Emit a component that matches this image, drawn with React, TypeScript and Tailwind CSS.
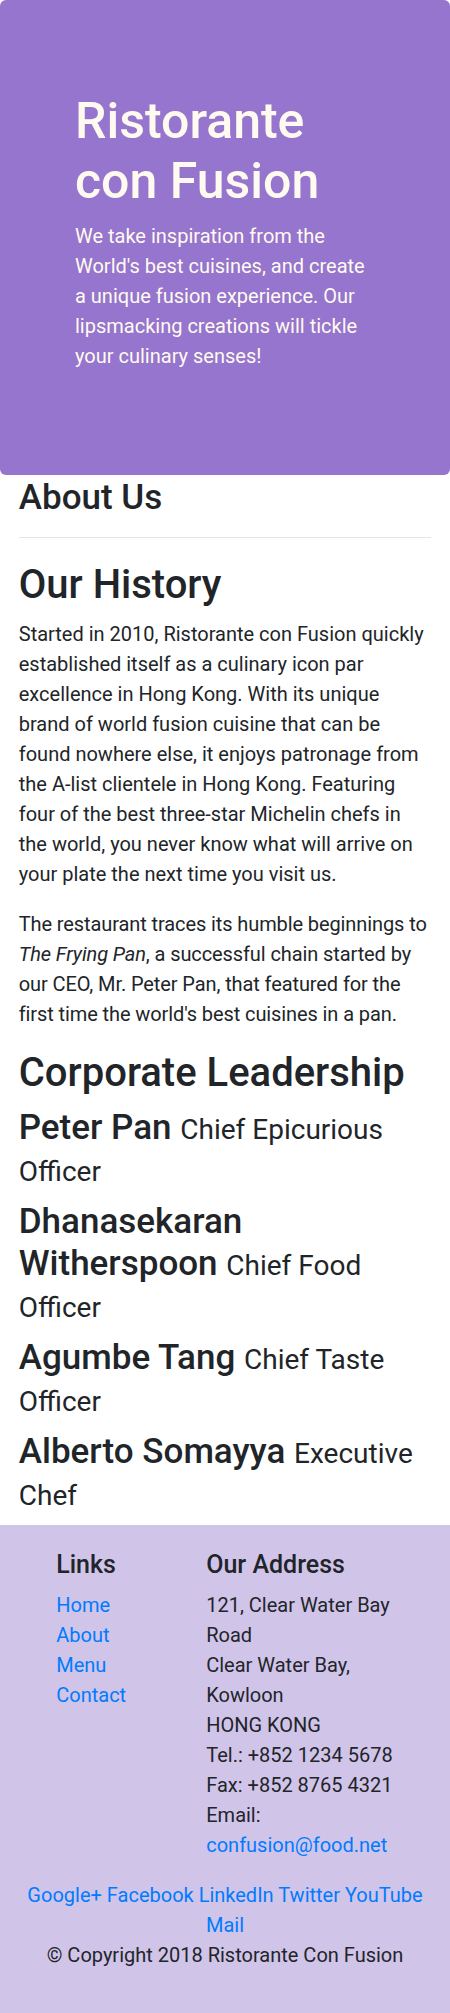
const leaders = [
  { name: 'Peter Pan', designation: 'Chief Epicurious Officer' },
  { name: 'Dhanasekaran Witherspoon', designation: 'Chief Food Officer' },
  { name: 'Agumbe Tang', designation: 'Chief Taste Officer' },
  { name: 'Alberto Somayya', designation: 'Executive Chef' },
];

const App = () => {
  return (
    <div className="bg-white font-['Segoe_UI',Roboto,'Helvetica_Neue',Arial,sans-serif] text-[20px] leading-[30px] text-[#212529]">
      {/* jumbotron */}
      <header className="rounded-[6px] bg-[#9575cd] px-[37.5px] py-[87.5px] text-[#fffaf0]">
        <div className="px-[37.5px]">
          <h1 className="mb-[10px] pt-[3px] text-[50px] leading-[60px] font-medium">Ristorante con Fusion</h1>
          <p className="mb-[17px]">
            We take inspiration from the World's best cuisines, and create a unique fusion experience. Our
            lipsmacking creations will tickle your culinary senses!
          </p>
        </div>
      </header>

      <main className="px-[18.75px]">
        <h3 className="mb-[10px] pt-[2px] text-[35px] leading-[42px] font-medium">About Us</h3>
        <hr className="mt-[18px] mb-[20px] border-t border-[rgba(0,0,0,0.1)]" />

        <h2 className="mb-[10px] pt-[3px] text-[40px] leading-[48px] font-medium">Our History</h2>
        <p className="mb-[20px]">
          Started in 2010, Ristorante con Fusion quickly established itself as a culinary icon par excellence in
          Hong Kong. With its unique brand of world fusion cuisine that can be found nowhere else, it enjoys
          patronage from the A-list clientele in Hong Kong. Featuring four of the best three-star Michelin chefs
          in the world, you never know what will arrive on your plate the next time you visit us.
        </p>
        <p className="mb-[20px] tracking-[-0.1px]">
          The restaurant traces its humble beginnings to <em>The Frying Pan</em>, a successful chain started by
          our CEO, Mr. Peter Pan, that featured for the first time the world's best cuisines in a pan.
        </p>

        <h2 className="mb-[10px] text-[40px] leading-[48px] font-medium">Corporate Leadership</h2>
        {leaders.map((leader) => (
          <h3 key={leader.name} className="mb-[10px] text-[35px] leading-[42px] font-medium">
            {leader.name} <small className="text-[28px] leading-none font-normal">{leader.designation}</small>
          </h3>
        ))}
      </main>

      <footer className="bg-[#d1c4e9] py-[25px]">
        <div className="flex flex-wrap">
          <div className="ml-[8.333333%] w-1/3 px-[18.75px]">
            <h5 className="mb-[10px] text-[25px] leading-[30px] font-medium">Links</h5>
            <ul>
              <li><a href="#" className="text-[#007bff]">Home</a></li>
              <li><a href="#" className="text-[#007bff]">About</a></li>
              <li><a href="#" className="text-[#007bff]">Menu</a></li>
              <li><a href="#" className="text-[#007bff]">Contact</a></li>
            </ul>
          </div>
          <div className="w-7/12 px-[18.75px]">
            <h5 className="mb-[10px] text-[25px] leading-[30px] font-medium">Our Address</h5>
            <address className="mb-[20px] not-italic">
              121, Clear Water Bay Road<br />
              Clear Water Bay, Kowloon<br />
              HONG KONG<br />
              Tel.: +852 1234 5678<br />
              Fax: +852 8765 4321<br />
              Email: <a href="#" className="text-[#007bff]">confusion@food.net</a>
            </address>
          </div>
          <div className="w-full px-[18.75px] text-center">
            <a href="#" className="text-[#007bff]">Google+</a>{' '}
            <a href="#" className="text-[#007bff]">Facebook</a>{' '}
            <a href="#" className="text-[#007bff]">LinkedIn</a>{' '}
            <a href="#" className="text-[#007bff]">Twitter</a>{' '}
            <a href="#" className="text-[#007bff]">YouTube</a>{' '}
            <a href="#" className="text-[#007bff]">Mail</a>
          </div>
        </div>
        <div className="flex justify-center">
          <p className="mb-[20px] px-[18.75px]">© Copyright 2018 Ristorante Con Fusion</p>
        </div>
      </footer>
    </div>
  );
};

export default App;
